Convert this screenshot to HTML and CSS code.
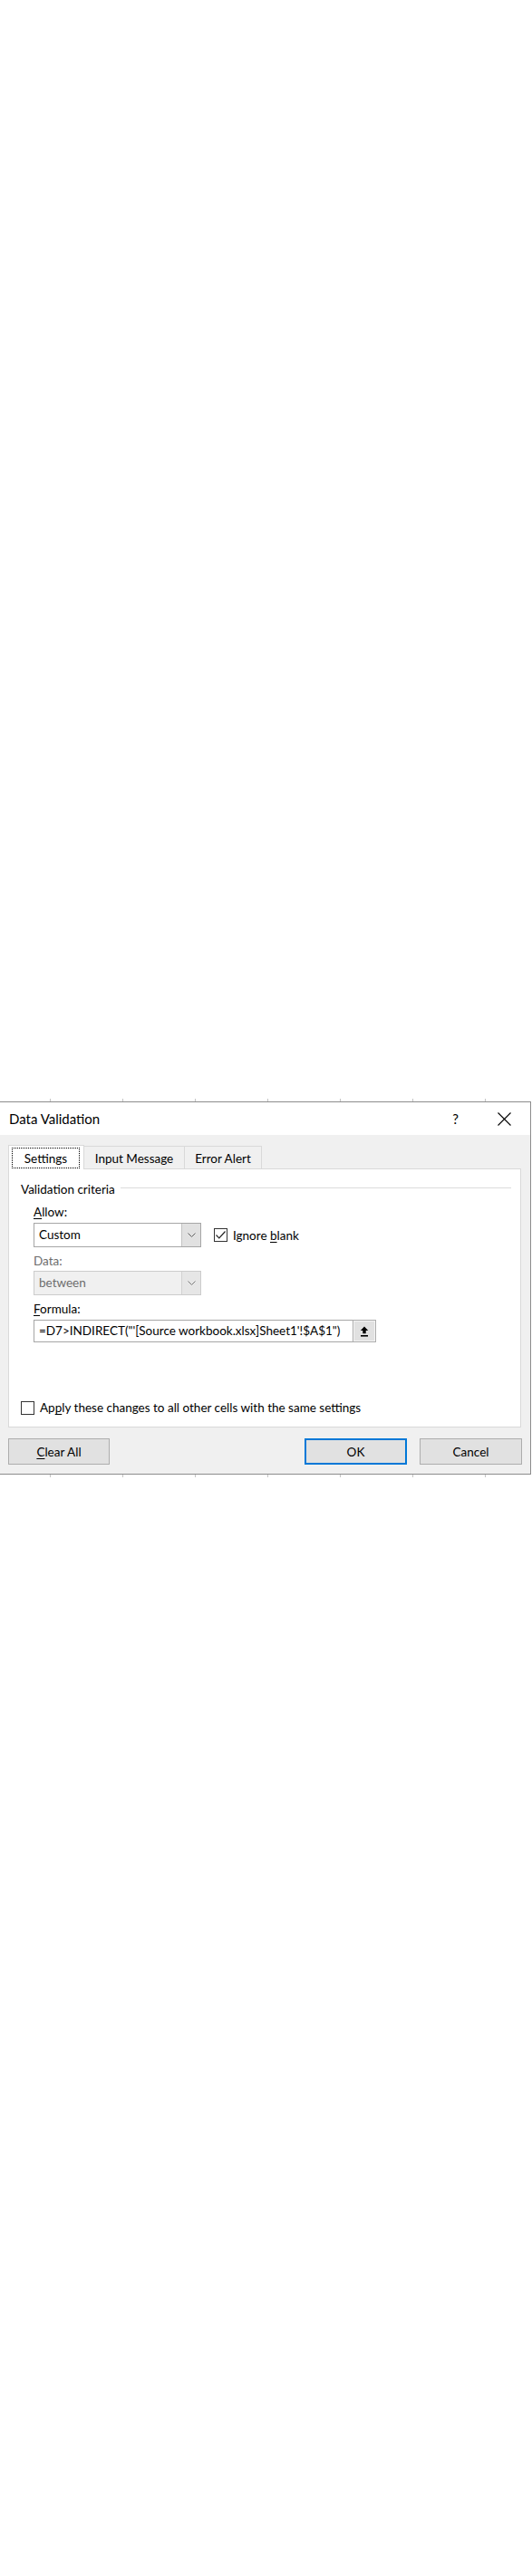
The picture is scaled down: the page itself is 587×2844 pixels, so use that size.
FILE: index.html
```html
<!DOCTYPE html>
<html>
<head>
<meta charset="utf-8">
<title>Data Validation</title>
<link rel="stylesheet" href="styles.css">
</head>
<body>
<div class="page">
  <div class="grid-top"><div class="ticks"></div></div>
  <div class="dialog">
    <div class="titlebar">
      <span class="title">Data Validation</span>
      <span class="help">?</span>
      <span class="close">
        <svg width="15" height="15" viewBox="0 0 15 15"><path d="M0.5 0.5 L14.5 14.5 M14.5 0.5 L0.5 14.5" stroke="#000" stroke-width="1.1" fill="none"/></svg>
      </span>
    </div>
    <div class="body">
      <div class="tabs">
        <div class="tab tab-active"><span class="focus">Settings</span></div>
        <div class="tab tab-input">Input Message</div>
        <div class="tab tab-error">Error Alert</div>
        <div class="tab-fill"></div>
      </div>
      <div class="panel">
        <div class="group-head">
          <span class="group-title">Validation criteria</span>
          <span class="rule"></span>
        </div>
        <div class="field-label label-allow"><u>A</u>llow:</div>
        <div class="row">
          <div class="combo">
            <span class="combo-text">Custom</span>
            <span class="combo-btn"><svg width="9" height="5" viewBox="0 0 9 5"><polyline points="0.5,0.5 4.5,4.5 8.5,0.5" fill="none" stroke="#606060" stroke-width="1"/></svg></span>
          </div>
          <div class="check">
            <span class="box"><svg width="13" height="13" viewBox="0 0 13 13"><polyline points="1.5,6.5 4.8,9.8 11.5,2.5" fill="none" stroke="#222" stroke-width="1.2"/></svg></span>
            <span class="check-label">Ignore <u>b</u>lank</span>
          </div>
        </div>
        <div class="field-label field-disabled">Data:</div>
        <div class="combo combo-disabled">
          <span class="combo-text">between</span>
          <span class="combo-btn"><svg width="9" height="5" viewBox="0 0 9 5"><polyline points="0.5,0.5 4.5,4.5 8.5,0.5" fill="none" stroke="#7a7a7a" stroke-width="1"/></svg></span>
        </div>
        <div class="field-label label-formula"><u>F</u>ormula:</div>
        <div class="formula-row">
          <div class="formula">=D7&gt;INDIRECT("'[Source workbook.xlsx]Sheet1'!$A$1")</div>
          <span class="ref-btn"><svg width="10" height="12" viewBox="0 0 10 12"><path d="M5 0.5 L0.8 5 H3.3 V8.2 H6.7 V5 H9.2 Z" fill="#000"/><rect x="1" y="10" width="8" height="1.6" fill="#000"/></svg></span>
        </div>
        <div class="apply">
          <span class="box"></span>
          <span class="check-label">Ap<u>p</u>ly these changes to all other cells with the same settings</span>
        </div>
      </div>
      <div class="buttons">
        <div class="btn"><u>C</u>lear All</div>
        <div class="spacer"></div>
        <div class="btn btn-primary">OK</div>
        <div class="btn btn-cancel">Cancel</div>
      </div>
    </div>
  </div>
  <div class="ticks"></div>
</div>
</body>
</html>
```

FILE: styles.css
```css
* { box-sizing: border-box; }
html, body { margin: 0; padding: 0; background: #fff; }
body {
  font-family: Lato, "Liberation Sans", sans-serif;
  font-size: 13.5px;
  color: #000;
}
.page {
  height: 2844px;
  overflow: hidden;
  padding-top: 1200px;
}
.grid-top {
  width: 586px;
  height: 16px;
  display: flex;
  align-items: flex-end;
}
.ticks {
  width: 586px;
  height: 3px;
  background-image: linear-gradient(to right, #c4c4c4 1px, transparent 1px);
  background-size: 80px 100%;
  background-position: 55px 0;
}

.dialog {
  width: 586px;
  height: 412px;
  border-top: 1px solid #8c8c8c;
  border-right: 1px solid #8c8c8c;
  border-bottom: 1px solid #8c8c8c;
  display: flex;
  flex-direction: column;
}
.titlebar {
  height: 36px;
  background: #fff;
  display: flex;
  align-items: center;
  padding-left: 10px;
  font-size: 15px;
}
.title { line-height: 20px; }
.help { margin-left: auto; margin-right: 43px; line-height: 20px; font-size: 15px; }
.close { width: 15px; height: 15px; margin-right: 21px; display: flex; }

.body {
  flex: 1;
  background: #f0f0f0;
  padding: 11px 0 0 9px;
  display: flex;
  flex-direction: column;
}
.tabs {
  width: 566px;
  height: 27px;
  display: flex;
  align-items: flex-end;
}
.tab {
  height: 26px;
  border-top: 1px solid #d9d9d9;
  border-right: 1px solid #d9d9d9;
  border-bottom: 1px solid #d9d9d9;
  background: #f0f0f0;
  display: flex;
  align-items: center;
  justify-content: center;
  line-height: 20px;
  padding-top: 2px;
}
.tab-active {
  height: 27px;
  width: 84px;
  background: #fff;
  border-left: 1px solid #d9d9d9;
  border-bottom: none;
  padding: 2px 4px 1px 3px;
  align-items: stretch;
  justify-content: flex-start;
}
.focus {
  width: 75px;
  border: 1px dotted #000;
  display: flex;
  align-items: center;
  justify-content: center;
  padding-top: 1px;
}
.tab-input { width: 111px; }
.tab-error { width: 85px; }
.tab-fill {
  flex: 1;
  height: 1px;
  background: #d9d9d9;
}

.panel {
  width: 566px;
  height: 285px;
  background: #fff;
  border: 1px solid #d9d9d9;
  border-top: none;
  display: flex;
  flex-direction: column;
  padding-left: 13px;
}
.group-head {
  margin-top: 12px;
  height: 20px;
  display: flex;
  align-items: center;
}
.group-title { line-height: 20px; }
.rule {
  flex: 1;
  height: 1px;
  background: #dcdcdc;
  margin: 0 10px 3px 6px;
}
.field-label {
  margin-left: 14px;
  line-height: 20px;
  height: 20px;
}
.label-allow { margin-top: 5px; }
.field-disabled { color: #6d6d6d; margin-top: 5px; }
.label-formula { margin-top: 5px; }
.row {
  margin-top: 2px;
  margin-left: 14px;
  display: flex;
  align-items: center;
}
.combo {
  width: 185px;
  height: 27px;
  border: 1px solid #a6a6a6;
  background: #fff;
  display: flex;
}
.combo-text {
  flex: 1;
  padding-left: 5px;
  line-height: 25px;
}
.combo-btn {
  width: 21px;
  background: #e1e1e1;
  border-left: 1px solid #c4c4c4;
  display: flex;
  align-items: center;
  justify-content: center;
}
.combo-disabled {
  margin-top: 1px;
  margin-left: 14px;
  background: #f0f0f0;
  border-color: #cccccc;
  color: #6d6d6d;
}
.combo-disabled .combo-btn {
  background: #e6e6e6;
  border-left-color: #d2d2d2;
}

.check {
  margin-left: 14px;
  display: flex;
  align-items: center;
}
.box {
  width: 15px;
  height: 15px;
  border: 1px solid #333;
  background: #fff;
  display: flex;
  align-items: center;
  justify-content: center;
}
.check-label {
  margin-left: 6px;
  line-height: 20px;
}

.formula-row {
  margin-top: 2px;
  margin-left: 14px;
  display: flex;
  height: 25px;
}
.formula {
  width: 352px;
  height: 25px;
  border: 1px solid #a6a6a6;
  border-right: none;
  padding-left: 5px;
  line-height: 23px;
  white-space: nowrap;
  overflow: hidden;
}
.ref-btn {
  width: 26px;
  height: 25px;
  background: #e1e1e1;
  border: 1px solid #adadad;
  box-shadow: inset 0 0 0 1px #f4f4f4;
  display: flex;
  align-items: center;
  justify-content: center;
}

.apply {
  margin-top: auto;
  margin-bottom: 11px;
  height: 20px;
  display: flex;
  align-items: center;
}

.buttons {
  margin-top: 12px;
  width: 567px;
  height: 29px;
  display: flex;
}
.spacer { flex: 1; }
.btn {
  width: 112px;
  height: 29px;
  background: #e1e1e1;
  border: 1px solid #adadad;
  display: flex;
  align-items: center;
  justify-content: center;
  line-height: 20px;
}
.btn-primary {
  width: 113px;
  border: 2px solid #0078d7;
}
.btn-cancel {
  width: 113px;
  margin-left: 14px;
}
u { text-decoration-thickness: 1px; text-underline-offset: 2px; }
```
